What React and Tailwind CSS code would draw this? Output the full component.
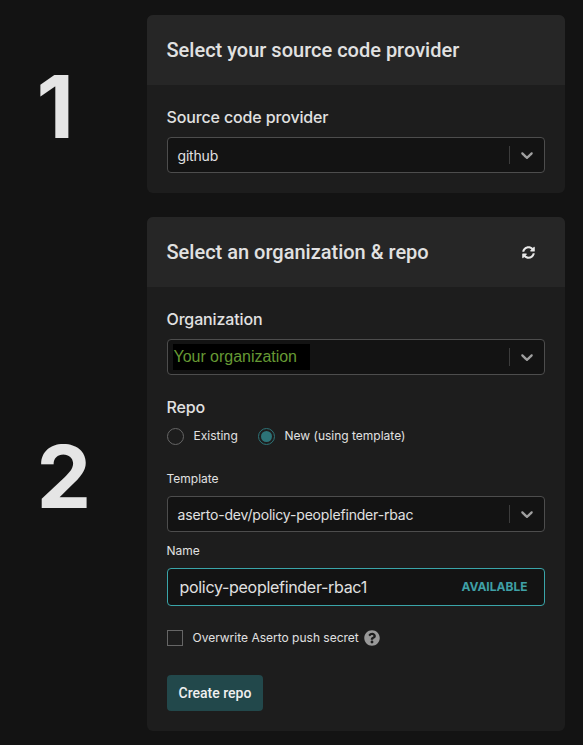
import { FaSyncAlt, FaQuestionCircle } from 'react-icons/fa';

function Chevron() {
  return (
    <svg width="20" height="20" viewBox="0 0 20 20" fill="#a0a0a0">
      <path d="M4.516 7.548c0.436-0.446 1.043-0.481 1.576 0l3.908 3.747 3.908-3.747c0.533-0.481 1.141-0.446 1.574 0 0.436 0.445 0.408 1.197 0 1.615-0.406 0.418-4.695 4.502-4.695 4.502-0.217 0.223-0.502 0.335-0.787 0.335s-0.57-0.112-0.789-0.335c0 0-4.287-4.084-4.695-4.502s-0.436-1.17 0-1.615z" />
    </svg>
  );
}

function Select({ children }) {
  return (
    <div className="flex h-9 items-center rounded border border-[#4d4d4d] bg-[#131313]">
      <div className="flex flex-1 items-center">{children}</div>
      <div className="h-[18px] w-px bg-[#3c3c3c]" />
      <div className="flex w-[34px] justify-center">
        <Chevron />
      </div>
    </div>
  );
}

function Step({ number, title, action, children }) {
  return (
    <section className="flex items-center">
      <div className="w-[147px] shrink-0 pl-[36.5px] pt-1 text-[87px] leading-none font-bold text-[#e5e5e5]">
        {number}
      </div>
      <div className="w-[418px] overflow-hidden rounded-md bg-[#1d1d1d]">
        <header className="flex h-[70px] items-center justify-between bg-[#262626] pr-[30px] pl-[19.5px]">
          <h2 className="font-[Roboto,sans-serif] text-xl font-medium">{title}</h2>
          {action}
        </header>
        <div className="px-5 pb-5">{children}</div>
      </div>
    </section>
  );
}

function Heading({ children }) {
  return (
    <h3 className="-ml-[0.5px] pt-px text-base leading-[23px] font-medium tracking-[-0.14px]">{children}</h3>
  );
}

export default function App() {
  return (
    <main className="flex h-[745px] w-[583px] flex-col gap-6 bg-[#131313] pt-[15px] font-[Inter,sans-serif] text-[#e1e1e1]">
      <Step number="1" title="Select your source code provider">
        <div className="flex flex-col gap-2 pt-5">
          <Heading>Source code provider</Heading>
          <Select>
            <span className="pt-0.5 pl-[9.5px] text-sm tracking-[-0.18px]">github</span>
          </Select>
        </div>
      </Step>
      <Step
        number="2"
        title="Select an organization & repo"
        action={<FaSyncAlt size={13} color="#e8e8e8" />}
      >
        <div className="flex flex-col gap-2 pt-5">
          <Heading>Organization</Heading>
          <Select>
            <span className="ml-[5px] h-[26px] w-[137px] bg-black pl-[0.5px] font-['Liberation_Sans',sans-serif] text-base leading-[26px] tracking-[-0.03px] text-[#669934]">
              Your organization
            </span>
          </Select>
        </div>
        <div className="pt-5">
          <Heading>Repo</Heading>
        </div>
        <div className="flex h-[34px] items-center text-xs">
          <span className="size-[17px] rounded-full border border-[#666]" />
          <span className="w-[74px] pl-[9.5px]">Existing</span>
          <span className="flex size-[17px] items-center justify-center rounded-full border border-[#2d7377]">
            <span className="size-[11px] rounded-full bg-[#2d7377]" />
          </span>
          <span className="pl-[9.5px]">New (using template)</span>
        </div>
        <div className="-ml-[0.5px] pt-[17px] pb-2 text-xs leading-[18px]">Template</div>
        <Select>
          <span className="pt-0.5 pl-[9.5px] text-sm tracking-[-0.18px]">aserto-dev/policy-peoplefinder-rbac</span>
        </Select>
        <div className="-ml-[0.5px] pt-[10px] pb-2 text-xs leading-[18px]">Name</div>
        <div className="flex h-[38px] items-center justify-between rounded border border-[#3aa5a9] bg-[#131313] pr-[16.5px] pl-[11.5px]">
          <span className="text-base tracking-[-0.3px]">policy-peoplefinder-rbac1</span>
          <span className="text-xs font-bold text-[#3fa0a6]">AVAILABLE</span>
        </div>
        <div className="flex items-center pt-6 text-xs">
          <span className="size-4 border border-[#666]" />
          <span className="w-[181px] pl-[9.5px]">Overwrite Aserto push secret</span>
          <FaQuestionCircle size={16} color="#999" />
        </div>
        <button className="mt-[29px] block h-9 w-24 rounded bg-[#22484b] font-[Roboto,sans-serif] text-sm font-medium text-[#f0f0f0]">
          Create repo
        </button>
      </Step>
    </main>
  );
}
